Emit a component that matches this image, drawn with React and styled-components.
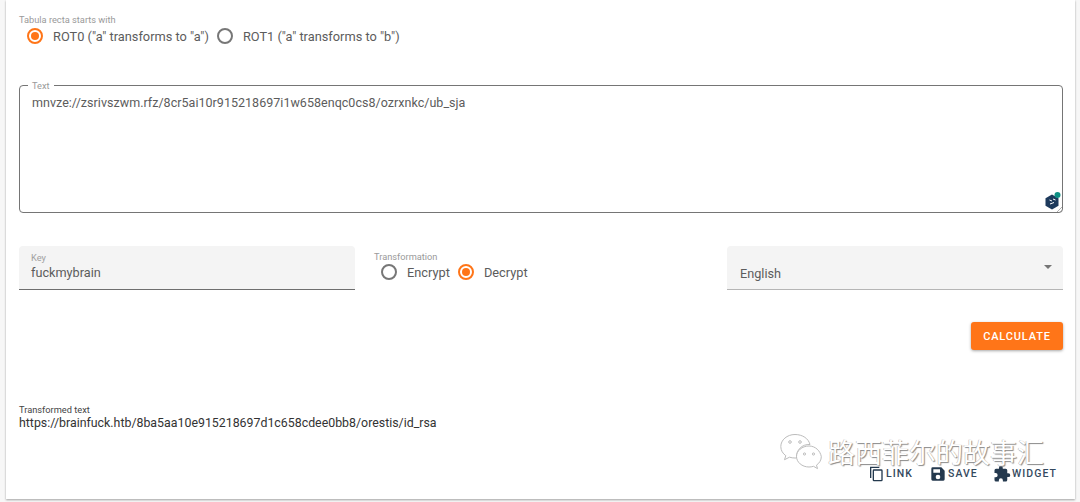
import React from "react";
import styled, { createGlobalStyle } from "styled-components";

const GlobalStyle = createGlobalStyle`
  html, body {
    margin: 0;
    height: 502px;
    overflow: hidden;
    background: #f7f7f7;
    font-family: Roboto, "Liberation Sans", sans-serif;
  }
`;

const Card = styled.div`
  position: relative;
  box-sizing: border-box;
  width: 1069px;
  height: 499px;
  margin-left: 6px;
  padding: 14px 12px 0 13px;
  background: #fff;
  box-shadow: 0 1px 2px rgba(0, 0, 0, 0.35);
`;

const GroupLabel = styled.div`
  font-size: 9.25px;
  line-height: 12px;
  color: #9a9a9a;
`;

const RadioRow = styled.div`
  display: flex;
  align-items: center;
  height: 20px;
  margin-top: ${(p) => p.$top || 0}px;
  margin-left: ${(p) => p.$indent}px;
`;

const RadioItem = styled.label`
  display: flex;
  align-items: center;
  gap: 10px;
  margin-right: 8px;
  font-size: 12.8px;
  color: #5c5c5c;
`;

const RadioCircle = styled.span`
  position: relative;
  box-sizing: border-box;
  width: 16px;
  height: 16px;
  border-radius: 50%;
  border: 2px solid ${(p) => (p.$on ? "#ff7518" : "#777")};
  &::after {
    content: "";
    display: ${(p) => (p.$on ? "block" : "none")};
    position: absolute;
    inset: 2px;
    border-radius: 50%;
    background: #ff7518;
  }
`;

const TextArea = styled.fieldset`
  position: relative;
  box-sizing: border-box;
  height: 133px;
  margin: 34px 0 0 0;
  padding: 0 12px;
  border: 1px solid #757575;
  border-radius: 4px;
  legend {
    padding: 0 4px;
    margin-left: -4px;
    font-size: 9.25px;
    line-height: 11px;
    color: #9a9a9a;
  }
`;

const TextValue = styled.div`
  margin-top: 4px;
  font-size: 12.5px;
  line-height: 16px;
  letter-spacing: 0.03px;
  color: #5c5c5c;
`;

const GrammarBadge = styled.svg`
  position: absolute;
  right: 1px;
  bottom: 2px;
  width: 16px;
  height: 18px;
`;

const ResizeHandle = styled.svg`
  position: absolute;
  right: 0;
  bottom: 0;
  width: 5px;
  height: 5px;
`;

const FieldsRow = styled.div`
  display: grid;
  grid-template-columns: 336px 354px 336px;
  gap: 0 9px;
  margin-top: 33px;
`;

const FilledField = styled.div`
  position: relative;
  box-sizing: border-box;
  height: 44px;
  padding: 6px 13px 0 12px;
  background: #f4f4f4;
  border-radius: 4px 4px 0 0;
  border-bottom: 1px solid ${(p) => p.$line};
`;

const FieldLabel = styled.div`
  font-size: 9.25px;
  line-height: 12px;
  color: #a0a0a0;
`;

const FieldValue = styled.div`
  margin-top: ${(p) => p.$top}px;
  margin-left: ${(p) => p.$left || 0}px;
  font-size: 12.7px;
  line-height: 16px;
  color: #5c5c5c;
`;

const Caret = styled.span`
  position: absolute;
  right: 11px;
  top: 19px;
  width: 0;
  height: 0;
  border-left: 4px solid transparent;
  border-right: 4px solid transparent;
  border-top: 4px solid #757575;
`;

const TransformCol = styled.div`
  padding: 5px 0 0 10px;
`;

const ButtonRow = styled.div`
  display: flex;
  justify-content: flex-end;
  margin-top: 32px;
`;

const CalcButton = styled.button`
  box-sizing: border-box;
  width: 92px;
  height: 28px;
  padding: 0;
  border: 0;
  border-radius: 3px;
  background: #ff7518;
  color: #fff;
  font-family: Roboto, sans-serif;
  font-size: 11px;
  font-weight: 500;
  letter-spacing: 0.85px;
  box-shadow: 0 1px 3px rgba(0, 0, 0, 0.35);
`;

const Output = styled.div`
  margin-top: 54px;
`;

const OutputLabel = styled.div`
  font-size: 9.25px;
  line-height: 12px;
  color: #444;
`;

const OutputValue = styled.div`
  font-size: 12.37px;
  line-height: 14px;
  color: #333;
`;

const Footer = styled.div`
  position: absolute;
  left: 862px;
  top: 465px;
  display: flex;
`;

const FooterLink = styled.span`
  display: flex;
  align-items: center;
  width: ${(p) => p.$width}px;
  font-size: 10.5px;
  font-weight: 500;
  letter-spacing: 1.05px;
  line-height: 16px;
  color: #34495e;
  svg {
    flex: none;
    width: ${(p) => p.$icon}px;
    height: ${(p) => p.$icon}px;
    fill: #24394e;
    margin-right: ${(p) => p.$gap}px;
  }
`;

const Watermark = styled.div`
  position: absolute;
  left: 780px;
  top: 433px;
  display: flex;
  align-items: center;
  gap: 6px;
`;

const WatermarkText = styled.span`
  font-family: "Noto Sans CJK SC", sans-serif;
  font-size: 27px;
  line-height: 36px;
  color: #fff;
  text-shadow: 1px 1px 1px #8a8a8a, -0.5px -0.5px 0 #b5b5b5;
`;

const Radio = ({ on, children }) => (
  <RadioItem>
    <RadioCircle $on={on} />
    {children}
  </RadioItem>
);

export default function App() {
  return (
    <>
      <GlobalStyle />
      <Card>
        <GroupLabel>Tabula recta starts with</GroupLabel>
        <RadioRow $indent={8}>
          <Radio on>ROT0 ("a" transforms to "a")</Radio>
          <Radio>ROT1 ("a" transforms to "b")</Radio>
        </RadioRow>

        <TextArea>
          <legend>Text</legend>
          <TextValue>mnvze://zsrivszwm.rfz/8cr5ai10r915218697i1w658enqc0cs8/ozrxnkc/ub_sja</TextValue>
          <GrammarBadge viewBox="0 0 16 18">
            <path d="M7 2.5l6.5 3.8v7.4L7 17.5.5 13.7V6.3z" fill="#1d3a5c" />
            <path d="M4.5 8l2.5 1M8 7l2.5 1M5 12l4-1.5" stroke="#fff" strokeWidth="1" />
            <circle cx="12.5" cy="3" r="3" fill="#0d8f84" />
          </GrammarBadge>
          <ResizeHandle viewBox="0 0 5 5">
            <path d="M5 0L0 5M5 3L3 5" stroke="#9a9a9a" strokeWidth="0.8" />
          </ResizeHandle>
        </TextArea>

        <FieldsRow>
          <FilledField $line="#6e6e6e">
            <FieldLabel>Key</FieldLabel>
            <FieldValue $top={1}>fuckmybrain</FieldValue>
          </FilledField>
          <TransformCol>
            <GroupLabel>Transformation</GroupLabel>
            <RadioRow $indent={7} $top={-1}>
              <Radio>Encrypt</Radio>
              <Radio on>Decrypt</Radio>
            </RadioRow>
          </TransformCol>
          <FilledField $line="#b5b5b5">
            <FieldValue $top={14} $left={1}>English</FieldValue>
            <Caret />
          </FilledField>
        </FieldsRow>

        <ButtonRow>
          <CalcButton>CALCULATE</CalcButton>
        </ButtonRow>

        <Output>
          <OutputLabel>Transformed text</OutputLabel>
          <OutputValue>https://brainfuck.htb/8ba5aa10e915218697d1c658cdee0bb8/orestis/id_rsa</OutputValue>
        </Output>

        <Footer>
          <FooterLink $width={62} $icon={16} $gap={2}>
            <svg viewBox="0 0 24 24">
              <path d="M3 1h14v2H5v15H3z" />
              <path d="M9 5h11a2 2 0 0 1 2 2v14a2 2 0 0 1-2 2H9a2 2 0 0 1-2-2V7a2 2 0 0 1 2-2zm0 2v14h11V7z" />
            </svg>
            LINK
          </FooterLink>
          <FooterLink $width={63} $icon={16} $gap={2}>
            <svg viewBox="0 0 24 24">
              <path d="M17 2H4a2 2 0 0 0-2 2v16a2 2 0 0 0 2 2h16a2 2 0 0 0 2-2V7zm-5 18a3.500 3.500 0 1 1 0-7 3.500 3.500 0 0 1 0 7zm3-10H5V5h10z" />
            </svg>
            SAVE
          </FooterLink>
          <FooterLink $width={70} $icon={18} $gap={1}>
            <svg viewBox="0 0 24 24">
              <path d="M20.500 11H19V7a2 2 0 0 0-2-2h-4V3.500a2.500 2.500 0 0 0-5 0V5H4a2 2 0 0 0-2 2v3.800h1.500a2.700 2.700 0 0 1 0 5.400H2V20a2 2 0 0 0 2 2h3.800v-1.500a2.700 2.700 0 0 1 5.400 0V22H17a2 2 0 0 0 2-2v-4h1.500a2.500 2.500 0 0 0 0-5z" />
            </svg>
            WIDGET
          </FooterLink>
        </Footer>
      </Card>

      <Watermark>
        <svg width="42" height="38" viewBox="0 0 42 38" fill="#fff" stroke="#bcbcbc" strokeWidth="1">
          <path d="M15 1.500C7 1.500 .8 7 .8 13.500c0 4 2 7 5 9.200l-1.300 4 5-2.500c2 .6 3.500.8 5.500.8h1.500C16 17 22 11 30 11.500 28.500 5.500 22.500 1.500 15 1.500z" />
          <path d="M29 13c-7 0-12.500 4.800-12.500 10.500S22 34 29 34c1.500 0 3-.2 4.500-.7l4 2.300-1-3.500c3-2 4.800-5 4.800-8.500C40.300 18 35.500 13 29 13z" />
          <circle cx="10" cy="9" r="1.300" />
          <circle cx="20" cy="9" r="1.300" />
          <circle cx="24.500" cy="21" r="1.100" />
          <circle cx="33.500" cy="21" r="1.100" />
        </svg>
        <WatermarkText>路西菲尔的故事汇</WatermarkText>
      </Watermark>
    </>
  );
}
